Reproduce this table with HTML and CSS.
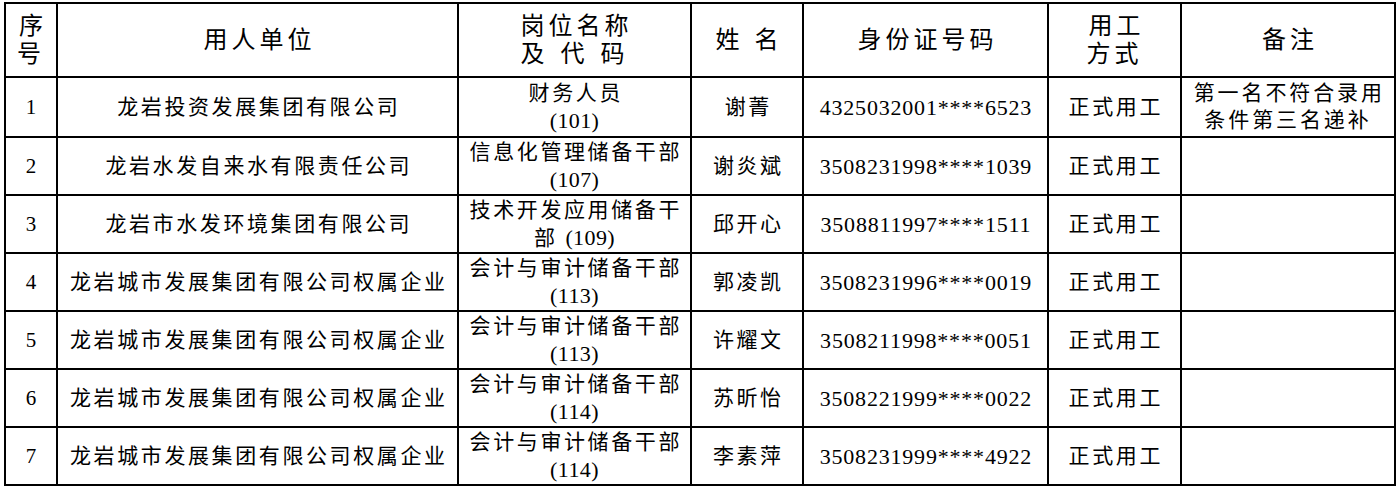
FILE: index.html
```html
<!DOCTYPE html>
<html lang="zh-CN">
<head>
<meta charset="utf-8">
<title>拟聘用人员名单</title>
<link rel="stylesheet" href="styles.css">
</head>
<body>
<table class="list">
  <colgroup>
    <col class="c-no">
    <col class="c-unit">
    <col class="c-post">
    <col class="c-name">
    <col class="c-id">
    <col class="c-type">
    <col class="c-note">
  </colgroup>
  <thead>
    <tr class="head">
      <th>序<br>号</th>
      <th>用人单位</th>
      <th>岗位名称<br>及<span class="gap"></span>代<span class="gap"></span>码</th>
      <th>姓<span class="gap-s"></span>名</th>
      <th>身份证号码</th>
      <th>用工<br>方式</th>
      <th>备注</th>
    </tr>
  </thead>
  <tbody>
    <tr class="r1">
      <td class="num">1</td>
      <td>龙岩投资发展集团有限公司</td>
      <td>财务人员<br><span class="code">(101)</span></td>
      <td>谢菁</td>
      <td class="id">4325032001****6523</td>
      <td>正式用工</td>
      <td class="note">第一名不符合录用<br>条件第三名递补</td>
    </tr>
    <tr>
      <td class="num">2</td>
      <td>龙岩水发自来水有限责任公司</td>
      <td>信息化管理储备干部<br><span class="code">(107)</span></td>
      <td>谢炎斌</td>
      <td class="id">3508231998****1039</td>
      <td>正式用工</td>
      <td></td>
    </tr>
    <tr>
      <td class="num">3</td>
      <td>龙岩市水发环境集团有限公司</td>
      <td>技术开发应用储备干<br>部 <span class="code">(109)</span></td>
      <td>邱开心</td>
      <td class="id">3508811997****1511</td>
      <td>正式用工</td>
      <td></td>
    </tr>
    <tr>
      <td class="num">4</td>
      <td>龙岩城市发展集团有限公司权属企业</td>
      <td>会计与审计储备干部<br><span class="code">(113)</span></td>
      <td>郭凌凯</td>
      <td class="id">3508231996****0019</td>
      <td>正式用工</td>
      <td></td>
    </tr>
    <tr>
      <td class="num">5</td>
      <td>龙岩城市发展集团有限公司权属企业</td>
      <td>会计与审计储备干部<br><span class="code">(113)</span></td>
      <td>许耀文</td>
      <td class="id">3508211998****0051</td>
      <td>正式用工</td>
      <td></td>
    </tr>
    <tr>
      <td class="num">6</td>
      <td>龙岩城市发展集团有限公司权属企业</td>
      <td>会计与审计储备干部<br><span class="code">(114)</span></td>
      <td>苏昕怡</td>
      <td class="id">3508221999****0022</td>
      <td>正式用工</td>
      <td></td>
    </tr>
    <tr>
      <td class="num">7</td>
      <td>龙岩城市发展集团有限公司权属企业</td>
      <td>会计与审计储备干部<br><span class="code">(114)</span></td>
      <td>李素萍</td>
      <td class="id">3508231999****4922</td>
      <td>正式用工</td>
      <td></td>
    </tr>
  </tbody>
</table>
</body>
</html>
```

FILE: styles.css
```css
html, body {
  margin: 0;
  padding: 0;
  background: #fff;
}

body {
  padding: 2px 0 0 4px;
  font-family: "Liberation Serif", "Noto Sans CJK SC", serif;
  color: #000;
}

.list {
  border-collapse: collapse;
  table-layout: fixed;
  width: 1390px;
}

.c-no { width: 52px; }
.c-unit { width: 401px; }
.c-post { width: 233px; }
.c-name { width: 112px; }
.c-id { width: 245px; }
.c-type { width: 133px; }
.c-note { width: 214px; }

.list th,
.list td {
  border: 2px solid #000;
  padding: 0;
  text-align: center;
  vertical-align: middle;
  overflow: hidden;
  white-space: nowrap;
}

.list th {
  font-weight: normal;
  font-size: 24px;
  line-height: 28px;
  letter-spacing: 4px;
  text-indent: 4px;
}

.head { height: 74px; }

.list td {
  font-size: 21px;
  line-height: 27px;
  letter-spacing: 2.6px;
  text-indent: 2.6px;
}

.list tbody tr { height: 58px; }
.list tbody tr.r1 { height: 60px; }

.list td.num {
  font-size: 21px;
  letter-spacing: 0;
  text-indent: 0;
}

.list td.id {
  font-size: 22px;
  letter-spacing: 0.8px;
  text-indent: 0.8px;
}

.list td.note {
  letter-spacing: 2.9px;
}

.code {
  font-size: 22px;
  letter-spacing: 0.4px;
}

.gap {
  display: inline-block;
  width: 12px;
}

.gap-s {
  display: inline-block;
  width: 11px;
}
```
